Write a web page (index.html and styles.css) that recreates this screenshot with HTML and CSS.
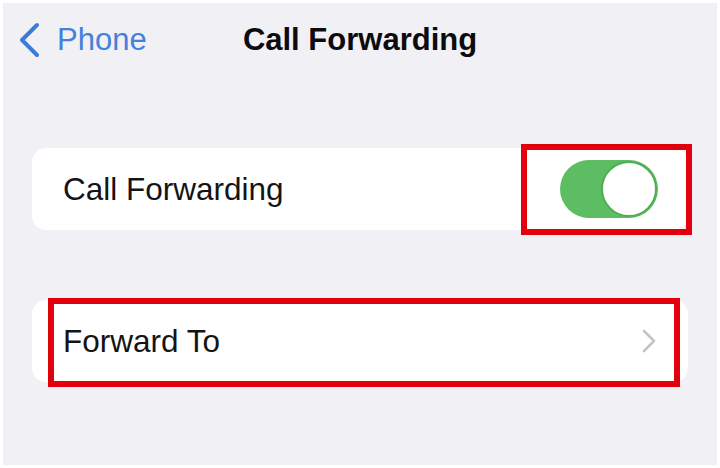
FILE: index.html
```html
<!DOCTYPE html>
<html lang="en">
<head>
    <meta charset="UTF-8">
    <meta name="viewport" content="width=device-width, initial-scale=1.0">
    <title>Call Forwarding</title>
    <link rel="stylesheet" href="styles.css">
</head>
<body>
    <div class="screen">
        <div class="nav">
            <a class="back" href="#">
                <svg class="back-icon" width="24" height="36" viewBox="0 0 24 36">
                    <path d="M20 3 L5 18 L20 33" fill="none" stroke="#3b7bd9" stroke-width="4" stroke-linecap="round" stroke-linejoin="round"/>
                </svg>
                <span>Phone</span>
            </a>
            <div class="title">Call Forwarding</div>
            <div></div>
        </div>

        <div class="card card-toggle">
            <span class="label">Call Forwarding</span>
            <div class="switch on"><div class="knob"></div></div>
            <div class="mark mark-switch"></div>
        </div>

        <div class="card card-link">
            <span class="label">Forward To</span>
            <svg class="chevron" width="14" height="24" viewBox="0 0 14 24">
                <path d="M2 2 L12 12 L2 22" fill="none" stroke="#c4c4c8" stroke-width="2.6" stroke-linecap="round" stroke-linejoin="round"/>
            </svg>
            <div class="mark mark-row"></div>
        </div>
    </div>
</body>
</html>
```

FILE: styles.css
```css
body {
    margin: 0;
    background: #fff;
    font-family: "Liberation Sans", Arial, sans-serif;
}
.screen {
    margin: 3px;
    height: 462px;
    background: #f1f0f5;
    overflow: hidden;
}
.nav {
    display: grid;
    grid-template-columns: 1fr auto 1fr;
    align-items: center;
    height: 74px;
}
.back {
    display: flex;
    align-items: center;
    gap: 16px;
    padding-left: 14px;
    color: #4481dc;
    font-size: 31px;
    text-decoration: none;
}
.back-icon {
    display: block;
}
.title {
    font-size: 31px;
    font-weight: bold;
    color: #0c0c0e;
}
.card {
    position: relative;
    display: flex;
    align-items: center;
    justify-content: space-between;
    height: 82px;
    margin: 0 29px;
    padding: 0 30px 0 31px;
    background: #fff;
    border-radius: 14px;
}
.card-toggle {
    margin-top: 71px;
}
.card-link {
    margin-top: 70px;
    padding-right: 32px;
}
.label {
    font-size: 31.5px;
    color: #141414;
}
.switch {
    position: relative;
    width: 98px;
    height: 58px;
    border-radius: 29px;
    background: #5dbd62;
}
.knob {
    position: absolute;
    top: 1px;
    right: 1px;
    width: 56px;
    height: 56px;
    box-sizing: border-box;
    border-radius: 50%;
    background: #fff;
    border: 2px solid #4fae55;
}
.chevron {
    display: block;
}
/* red highlight frames drawn over the rows */
.mark {
    position: absolute;
    border: 6px solid #e2000c;
    box-sizing: border-box;
}
.mark-switch {
    left: 489px;
    top: -4px;
    width: 171px;
    height: 91px;
}
.mark-row {
    left: 16px;
    top: -2px;
    width: 632px;
    height: 89px;
}
```
